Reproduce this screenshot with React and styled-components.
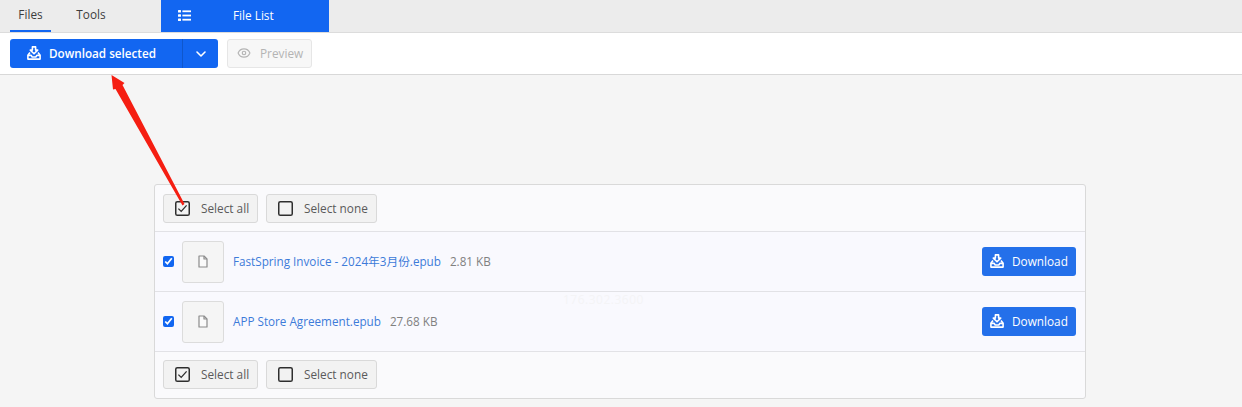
import React from 'react'
import styled, { createGlobalStyle } from 'styled-components'
import { Eye, ChevronDown } from 'lucide-react'

const Global = createGlobalStyle`
  html, body { margin: 0; padding: 0; }
  body {
    background: #f5f5f5;
    font-family: "Open Sans", "Noto Sans CJK SC", sans-serif;
    overflow: hidden;
  }
`

const Page = styled.div`
  position: relative;
  width: 1242px;
  height: 407px;
  overflow: hidden;
`

const TabBar = styled.div`
  height: 32px;
  display: flex;
  background: #ececec;
  border-bottom: 1px solid #dcdcdc;
  padding-left: 10px;
`

const Tab = styled.div`
  width: ${p => p.$width}px;
  height: 32px;
  box-sizing: border-box;
  display: flex;
  align-items: center;
  justify-content: center;
  padding-bottom: 2px;
  font-size: 11.8px;
  color: #3c3c3c;
  border-bottom: 2px solid ${p => (p.$active ? '#1266f1' : 'transparent')};
`

const FileListTab = styled.div`
  margin-left: 30px;
  width: 168px;
  height: 32px;
  box-sizing: border-box;
  padding: 0 0 2px 17px;
  display: flex;
  align-items: center;
  gap: 42px;
  background: #1266f1;
  color: #fff;
  font-size: 11.8px;
`

const Toolbar = styled.div`
  height: 41px;
  display: flex;
  align-items: center;
  gap: 9px;
  padding: 0 10px;
  background: #fff;
  border-bottom: 1px solid #d8d8d8;
`

const SplitButton = styled.div`
  display: flex;
  height: 29px;
  border-radius: 3px;
  overflow: hidden;
  background: #1266f1;
  color: #fff;
`

const SplitMain = styled.div`
  width: 173px;
  display: flex;
  align-items: center;
  gap: 8px;
  padding: 0 0 2px 17px;
  box-sizing: border-box;
  font-size: 11.7px;
  font-weight: 600;
  border-right: 1px solid #0f57cc;
`

const SplitCaret = styled.div`
  width: 35px;
  display: flex;
  align-items: center;
  justify-content: center;
`

const PreviewButton = styled.div`
  width: 85px;
  height: 29px;
  box-sizing: border-box;
  display: flex;
  align-items: center;
  gap: 9px;
  padding: 0 0 1px 9px;
  background: #f7f7f7;
  border: 1px solid #e6e6e6;
  border-radius: 3px;
  color: #b4b4b4;
  font-size: 11.8px;
`

const Body = styled.div`
  padding: 109px 0 0 154px;
`

const Card = styled.div`
  width: 932px;
  height: 215px;
  box-sizing: border-box;
  background: #fafafc;
  border: 1px solid #d9d9d9;
  border-radius: 3px;
  display: flex;
  flex-direction: column;
`

const ActionRow = styled.div`
  height: ${p => p.$height}px;
  box-sizing: border-box;
  display: flex;
  align-items: center;
  gap: 8px;
  padding-left: 8px;
  ${p => p.$ruled && 'border-top: 1px solid #e2e2e6; padding-bottom: 2px;'}
`

const SelectButton = styled.div`
  width: ${p => p.$width}px;
  height: 29px;
  box-sizing: border-box;
  display: flex;
  align-items: center;
  gap: 11px;
  padding-left: 11px;
  background: #f2f2f2;
  border: 1px solid #d9d9d9;
  border-radius: 3px;
  color: #5a5a5a;
  font-size: 11.8px;
`

const FileRow = styled.div`
  height: 60px;
  box-sizing: border-box;
  display: flex;
  align-items: center;
  padding: 0 9px 0 8px;
  background: #f9f9fe;
  border-top: 1px solid #e2e2e6;
`

const Check = styled.input.attrs({ type: 'checkbox', defaultChecked: true })`
  width: 11px;
  height: 11px;
  margin: 0 8px 0 0;
  accent-color: #1266f1;
`

const Thumb = styled.div`
  width: 42px;
  height: 42px;
  box-sizing: border-box;
  display: flex;
  align-items: center;
  justify-content: center;
  background: #f5f5f5;
  border: 1px solid #dcdcdc;
  border-radius: 3px;
  margin-right: 9px;
`

const FileName = styled.a`
  color: #3d7bd9;
  font-size: 11.7px;
  margin: 0 9px 2px 0;
`

const FileSize = styled.span`
  color: #808080;
  font-size: 11.7px;
  margin-bottom: 2px;
`

const DownloadButton = styled.div`
  margin-left: auto;
  width: 94px;
  height: 29px;
  box-sizing: border-box;
  display: flex;
  align-items: center;
  gap: 8px;
  padding: 0 0 2px 8px;
  background: #2470ea;
  border-radius: 3px;
  color: #fff;
  font-size: 11.8px;
`

const Arrow = styled.svg`
  position: absolute;
  left: 0;
  top: 0;
  pointer-events: none;
`

const Watermark = styled.span`
  position: absolute;
  left: 563px;
  top: 291px;
  font-size: 12px;
  letter-spacing: 0.5px;
  color: #f4f4f6;
`

const InboxDown = ({ size = 14 }) => (
  <svg width={size} height={size} viewBox="0 0 14 14" fill="none" stroke="currentColor" strokeWidth="1.6" strokeLinejoin="round">
    <path d="M5.4 0.9h3.2v3.2h2.1L7 7.8 3.3 4.1h2.1z" />
    <path d="M3 6.4 0.9 9.2v3.9h12.2V9.2L11 6.4" />
    <path d="M0.9 9.4h3.3l1 1.6h3.6l1-1.6h3.3" />
  </svg>
)

const ListIcon = () => (
  <svg width="13" height="11" viewBox="0 0 13 11" fill="currentColor">
    <rect x="0" y="0" width="3" height="2.6" rx="0.5" />
    <rect x="0" y="4.2" width="3" height="2.6" rx="0.5" />
    <rect x="0" y="8.4" width="3" height="2.6" rx="0.5" />
    <rect x="4.4" y="0.4" width="8.6" height="1.8" />
    <rect x="4.4" y="4.6" width="8.6" height="1.8" />
    <rect x="4.4" y="8.8" width="8.6" height="1.8" />
  </svg>
)

const PageIcon = () => (
  <svg width="10" height="13" viewBox="0 0 10 13" fill="#fafafa" stroke="#8c8c8c" strokeWidth="1.2" strokeLinejoin="round">
    <path d="M1 1h5l3 3v8H1z" />
    <path d="M6 1v3h3" fill="none" />
  </svg>
)

const BoxIcon = ({ checked }) => (
  <svg width="15" height="15" viewBox="0 0 15 15" fill="none" stroke="#2e2e2e" strokeWidth="1.5">
    <rect x="0.75" y="0.75" width="13.5" height="13.5" rx="1.6" />
    {checked && <path d="M3.4 7.6 6.2 10.4 11.6 4.4" strokeWidth="1.3" />}
  </svg>
)

const SelectRow = ({ height, ruled }) => (
  <ActionRow $height={height} $ruled={ruled}>
    <SelectButton $width={95}>
      <BoxIcon checked />
      Select all
    </SelectButton>
    <SelectButton $width={111}>
      <BoxIcon />
      Select none
    </SelectButton>
  </ActionRow>
)

const files = [
  { name: 'FastSpring Invoice - 2024年3月份.epub', size: '2.81 KB' },
  { name: 'APP Store Agreement.epub', size: '27.68 KB' },
]

export default function App() {
  return (
    <Page>
      <Global />
      <TabBar>
        <Tab $width={41} $active>Files</Tab>
        <Tab $width={80}>Tools</Tab>
        <FileListTab>
          <ListIcon />
          File List
        </FileListTab>
      </TabBar>
      <Toolbar>
        <SplitButton>
          <SplitMain>
            <InboxDown />
            Download selected
          </SplitMain>
          <SplitCaret>
            <ChevronDown size={16} strokeWidth={2.4} />
          </SplitCaret>
        </SplitButton>
        <PreviewButton>
          <Eye size={14} />
          Preview
        </PreviewButton>
      </Toolbar>
      <Body>
        <Card>
          <SelectRow height={46} />
          {files.map(f => (
            <FileRow key={f.name}>
              <Check />
              <Thumb>
                <PageIcon />
              </Thumb>
              <FileName>{f.name}</FileName>
              <FileSize>{f.size}</FileSize>
              <DownloadButton>
                <InboxDown />
                Download
              </DownloadButton>
            </FileRow>
          ))}
          <SelectRow height={47} ruled />
        </Card>
      </Body>
      <Watermark>176.302.3600</Watermark>
      <Arrow width="1242" height="407" viewBox="0 0 1242 407">
        <path d="M111.5 75 L124.5 83 L122.5 85 L184.5 204 L182.5 205.5 L115.5 89 L113 89.5 Z" fill="#f51e12" />
      </Arrow>
    </Page>
  )
}
